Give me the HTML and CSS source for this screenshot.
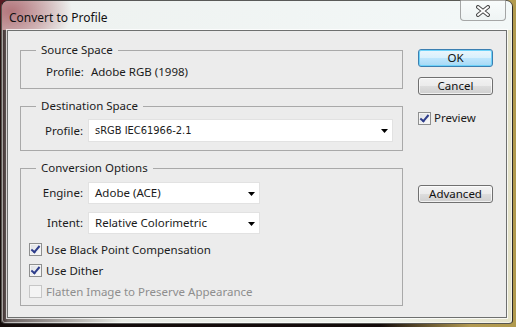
FILE: index.html
```html
<!DOCTYPE html>
<html lang="en">
<head>
    <meta charset="UTF-8">
    <title>Convert to Profile</title>
    <link rel="stylesheet" href="styles.css">
</head>
<body>

    <div class="window">
        <div class="titlebar">
            <span class="title">Convert to Profile</span>
            <div class="close-btn">
                <svg width="14" height="12" viewBox="0 0 14 12">
                    <path d="M2 2 L12 10 M12 2 L2 10" stroke="#4a4a4a" stroke-width="4" stroke-linecap="round"/>
                    <path d="M2 2 L12 10 M12 2 L2 10" stroke="#ffffff" stroke-width="2" stroke-linecap="round"/>
                </svg>
            </div>
        </div>

        <div class="client">
            <div class="groups">
                <div class="group source">
                    <div class="group-title">Source Space</div>
                    <div class="source-row">
                        <span>Profile:</span>
                        <span class="source-value">Adobe RGB (1998)</span>
                    </div>
                </div>

                <div class="group dest">
                    <div class="group-title">Destination Space</div>
                    <div class="field-row">
                        <label class="field-label">Profile:</label>
                        <div class="select wide tahoma">
                            <span>sRGB IEC61966-2.1</span>
                            <svg class="arrow" width="7" height="4" viewBox="0 0 7 4"><path d="M0 0 H7 L3.5 4 Z" fill="#000"/></svg>
                        </div>
                    </div>
                </div>

                <div class="group options">
                    <div class="group-title">Conversion Options</div>
                    <div class="field-row first">
                        <label class="field-label">Engine:</label>
                        <div class="select">
                            <span>Adobe (ACE)</span>
                            <svg class="arrow" width="7" height="4" viewBox="0 0 7 4"><path d="M0 0 H7 L3.5 4 Z" fill="#000"/></svg>
                        </div>
                    </div>
                    <div class="field-row">
                        <label class="field-label">Intent:</label>
                        <div class="select">
                            <span>Relative Colorimetric</span>
                            <svg class="arrow" width="7" height="4" viewBox="0 0 7 4"><path d="M0 0 H7 L3.5 4 Z" fill="#000"/></svg>
                        </div>
                    </div>
                    <div class="checks">
                        <div class="check-row">
                            <span class="checkbox checked"></span>
                            <span>Use Black Point Compensation</span>
                        </div>
                        <div class="check-row">
                            <span class="checkbox checked"></span>
                            <span>Use Dither</span>
                        </div>
                        <div class="check-row disabled">
                            <span class="checkbox"></span>
                            <span>Flatten Image to Preserve Appearance</span>
                        </div>
                    </div>
                </div>
            </div>

            <div class="buttons">
                <button type="button" class="btn btn-default">OK</button>
                <button type="button" class="btn">Cancel</button>
                <div class="check-row preview">
                    <span class="checkbox checked"></span>
                    <span>Preview</span>
                </div>
                <button type="button" class="btn btn-advanced">Advanced</button>
            </div>
        </div>
    </div>

</body>
</html>
```

FILE: styles.css
```css
body {
    margin: 0;
    width: 516px;
    height: 327px;
    overflow: hidden;
    font-family: 'Segoe UI', 'Noto Sans', sans-serif;
    font-size: 11.5px;
    line-height: 14px;
    color: #1b1b1b;
    background:
        linear-gradient(90deg, transparent 0, transparent 380px, rgba(196, 170, 90, 0.9) 470px, #b19a4e 516px),
        linear-gradient(180deg, #5a1a22 0, #2a1414 40px, #140c0b 100%);
}
.window {
    box-sizing: border-box;
    width: 512px;
    height: 324px;
    margin-left: 1px;
    border: 1px solid rgba(40, 40, 40, 0.75);
    border-radius: 7px 7px 4px 4px;
    box-shadow: inset 0 0 0 1px rgba(255, 255, 255, 0.55);
    padding: 0 5px 5px 5px;
    background: linear-gradient(90deg, #3a2c2b 0, #6d6463 6px, #e9ece6 120px, #eef2ec 380px, #e4e2c8 100%);
}
.titlebar {
    height: 29px;
    display: flex;
    justify-content: space-between;
    align-items: flex-start;
    margin: 0 -5px;
    padding: 0 5px;
    border-radius: 6px 6px 0 0;
    background:
        radial-gradient(ellipse 60px 40px at 10px 10px, rgba(150, 60, 70, 0.6), rgba(150, 60, 70, 0) 100%),
        linear-gradient(90deg, #d9c6c6 0, #eef2f0 70px, #f3f8f8 100%);
}
.title {
    margin-top: 9px;
    margin-left: 2px;
    line-height: 16px;
    font-size: 12px;
    color: #111;
}
.close-btn {
    box-sizing: border-box;
    width: 46px;
    height: 21px;
    margin-top: -1px;
    margin-right: 1px;
    border: 1px solid rgba(110, 110, 110, 0.6);
    border-top: none;
    border-radius: 0 0 4px 4px;
    background: linear-gradient(180deg, rgba(255, 255, 255, 0.5), rgba(235, 240, 240, 0.5));
    display: flex;
    align-items: center;
    justify-content: center;
    padding-top: 1px;
}
.client {
    box-sizing: border-box;
    height: 288px;
    border: 1px solid #6e706f;
    box-shadow: 0 0 0 1px rgba(255, 255, 255, 0.75);
    background-color: #ececec;
    display: flex;
    gap: 15px;
    padding: 0 12px 0 12px;
}
.groups {
    width: 383px;
    margin-top: 19px;
}
.group {
    border: 1px solid #a9a9a9;
}
.group-title {
    width: fit-content;
    height: 14px;
    margin: -8px 0 0 15px;
    padding: 0 5px;
    background-color: #ececec;
}
.source {
    padding-bottom: 9px;
}
.source-row {
    display: flex;
    gap: 7px;
    margin-top: 8px;
    padding-left: 25px;
}
.dest {
    margin-top: 17px;
    padding-bottom: 8px;
}
.options {
    margin-top: 17px;
    padding-bottom: 3px;
}
.field-row {
    display: flex;
    align-items: center;
    margin-top: 8px;
}
.dest .field-row {
    margin-top: 6px;
}
.field-row.first {
    margin-top: 7px;
}
.field-label {
    width: 62px;
    margin-right: 5px;
    text-align: right;
}
.select {
    box-sizing: border-box;
    width: 172px;
    height: 22px;
    display: flex;
    align-items: center;
    justify-content: space-between;
    padding: 0 4px 0 6px;
    background-color: #fff;
    border: 1px solid #e2e2e2;
}
.select.wide {
    width: 305px;
    height: 23px;
}
.tahoma {
    font-family: 'DejaVu Sans Condensed', 'DejaVu Sans', sans-serif;
    font-size: 11px;
}
.arrow {
    margin-top: 1px;
}
.checks {
    margin-top: 5px;
    padding-left: 8px;
}
.check-row {
    display: flex;
    align-items: center;
    gap: 4px;
    height: 21px;
}
.check-row.disabled {
    color: #8e8e8e;
}
.checkbox {
    box-sizing: border-box;
    width: 13px;
    height: 13px;
    border: 1px solid #8e8f8f;
    background: linear-gradient(135deg, #dcdfe3, #fbfbfb);
    box-shadow: inset 0 0 0 1px #f4f4f4;
    position: relative;
}
.checkbox.checked::after {
    content: '';
    position: absolute;
    left: 3px;
    top: 0px;
    width: 3px;
    height: 7px;
    border: solid #2e3d8b;
    border-width: 0 2px 2px 0;
    transform: rotate(40deg);
}
.check-row.disabled .checkbox {
    border-color: #c6c6c6;
    background: #f4f4f4;
}
.buttons {
    width: 75px;
    margin-top: 18px;
    display: flex;
    flex-direction: column;
}
.btn {
    box-sizing: border-box;
    width: 75px;
    height: 18px;
    padding: 0;
    font-family: 'Segoe UI', 'Noto Sans', sans-serif;
    font-size: 11.5px;
    line-height: 14px;
    color: #111;
    border: 1px solid #707070;
    border-radius: 3px;
    background: linear-gradient(180deg, #f2f2f2 0, #ebebeb 50%, #dddddd 51%, #cfcfcf 100%);
    box-shadow: inset 0 0 0 1px rgba(255, 255, 255, 0.7);
}
.btn + .btn {
    margin-top: 10px;
}
.btn-default {
    border-color: #3c7fb1;
    background: linear-gradient(180deg, #eaf6fd 0, #d9f0fc 50%, #bee6fd 51%, #a7d9f5 100%);
    box-shadow: inset 0 0 0 1px #6dd2f9;
}
.preview {
    margin-top: 15px;
    height: 16px;
    gap: 3px;
}
.btn-advanced {
    margin-top: 59px;
}
```
